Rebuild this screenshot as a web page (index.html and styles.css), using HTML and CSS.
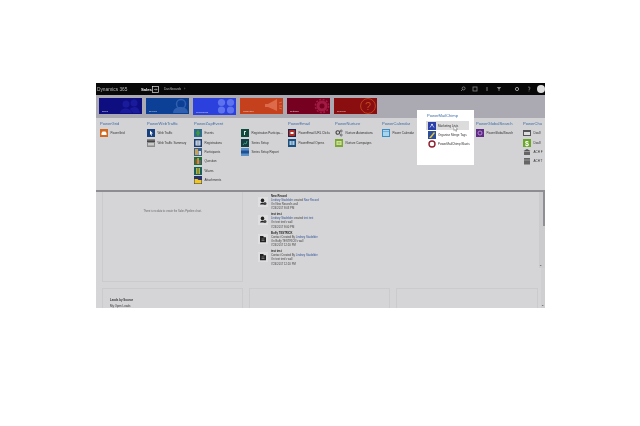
FILE: index.html
```html
<!DOCTYPE html>
<html lang="en">
<head>
<meta charset="utf-8">
<title>Dynamics 365 Sales</title>
<link rel="stylesheet" href="styles.css">
</head>
<body>
<div class="app">
  <header class="topbar">
    <span class="brand">Dynamics 365</span>
    <span class="module">Sales</span>
    <svg class="modicon" viewBox="0 0 7 7"><rect x=".5" y=".5" width="6" height="6" fill="none" stroke="#ddd" stroke-width=".7"/><path d="M2 3.5h3M4 2.5l1 1-1 1" fill="none" stroke="#ddd" stroke-width=".5"/></svg>
    <span class="crumb">Dashboards</span><span class="crumb">›</span>
    <div class="tools">
      <svg viewBox="0 0 6 6"><circle cx="3.6" cy="2.4" r="1.5" fill="none" stroke="#999" stroke-width=".7"/><path d="M2.5 3.5L1 5" stroke="#999" stroke-width=".7"/></svg>
      <svg viewBox="0 0 6 6"><rect x="1" y="1" width="4" height="4" fill="none" stroke="#888" stroke-width=".8"/></svg>
      <svg viewBox="0 0 6 6"><path d="M3 1v4" stroke="#888" stroke-width=".9"/></svg>
      <svg viewBox="0 0 6 6"><path d="M.8 1h4.4L3.4 3.2V5H2.6V3.2z" fill="#888"/></svg>
      <svg class="gap" viewBox="0 0 6 6"><circle cx="3" cy="3" r="1.6" fill="none" stroke="#999" stroke-width="1"/></svg>
      <svg viewBox="0 0 6 6"><path d="M2 1.6C2.4.8 4 .8 4 2 4 3 3 3 3 4M3 4.6v.8" fill="none" stroke="#999" stroke-width=".7"/></svg>
      <span class="avatar"></span>
    </div>
  </header>

  <nav class="tiles">
    <div class="tile sales"><span>Sales</span>
      <svg viewBox="0 0 43 16"><circle cx="27" cy="6" r="3.5" fill="#1a1a9c"/><circle cx="35" cy="5" r="3.5" fill="#1a1a9c"/><path d="M21 15c0-6 11-6 12 0zM31 11c3-3 9-3 10 4h-7z" fill="#1a1a9c"/></svg></div>
    <div class="tile service"><span>Service</span>
      <svg viewBox="0 0 43 16"><circle cx="35" cy="6" r="4.500" fill="none" stroke="#2f5fae" stroke-width="1.500"/><path d="M27 15c0-8 15-8 15 0z" fill="#2f5fae"/></svg></div>
    <div class="tile pack"><span>PowerPack</span>
      <svg viewBox="0 0 43 16"><circle cx="28.500" cy="4.500" r="3.600" fill="#5d72ee"/><circle cx="37.500" cy="4.500" r="3.600" fill="#5d72ee"/><circle cx="28.500" cy="12" r="3.600" fill="#5d72ee"/><circle cx="37.500" cy="12" r="3.600" fill="#5d72ee"/></svg></div>
    <div class="tile marketing"><span>Marketing</span>
      <svg viewBox="0 0 43 16"><path d="M28 6l9-5v12l-9-4h-3V6z" fill="#dd6a4a"/><path d="M39 5l3-1M39 8h3M39 10l3 1" stroke="#dd6a4a"/></svg></div>
    <div class="tile settings"><span>Settings</span>
      <svg viewBox="0 0 43 16"><circle cx="35" cy="8" r="4" fill="none" stroke="#a11a44" stroke-width="3"/><circle cx="35" cy="8" r="6.600" fill="none" stroke="#a11a44" stroke-width="1.600" stroke-dasharray="2 1.500"/></svg></div>
    <div class="tile training"><span>Training</span>
      <svg viewBox="0 0 43 16"><circle cx="34" cy="8" r="7.400" fill="none" stroke="#c14a1e" stroke-width=".9"/><text x="34" y="11.800" class="q">?</text></svg></div>
  </nav>

  <section class="menu">
    <div class="col">
      <h3>PowerGrid</h3>
      <div class="item"><svg viewBox="0 0 8 8"><rect width="8" height="8" fill="#d2691e"/><path d="M1.5 6V4l1-1.500h3L6.500 4v2z" fill="#fff"/></svg>PowerGrid</div>
    </div>
    <div class="col">
      <h3>PowerWebTraffic</h3>
      <div class="item"><svg viewBox="0 0 8 8"><rect width="8" height="8" fill="#17407e"/><path d="M3 1.500l3 3H4.400L5 6.500 4.200 6.800 3.600 5 3 6z" fill="#fff"/></svg>Web Traffic</div>
      <div class="item"><svg viewBox="0 0 8 8"><rect width="8" height="8" fill="#8b8b8b"/><rect y="1.500" width="8" height="1.500" fill="#444"/><rect x="1" y="4" width="6" height="2.500" fill="#c9c9c9"/></svg>Web Traffic Summary</div>
    </div>
    <div class="col">
      <h3>PowerZapEvent</h3>
      <div class="item"><svg viewBox="0 0 8 8"><rect width="8" height="8" fill="#2d6a8e"/><path d="M4 .5L6 4 4 7.500 2 4z" fill="#3f9a3a"/></svg>Events</div>
      <div class="item"><svg viewBox="0 0 8 8"><rect width="8" height="8" fill="#1c3f73"/><rect x="1.500" y="1.500" width="5" height="5" fill="#dfe4ea"/><path d="M2.500 3h3M2.500 5h3" stroke="#1c3f73" stroke-width=".6"/></svg>Registrations</div>
      <div class="item"><svg viewBox="0 0 8 8"><rect width="8" height="8" fill="#3c5f86"/><rect x="1" y="1" width="3" height="6" fill="#c9a25a"/><rect x="4.500" y="3" width="2.500" height="4" fill="#d8d8d8"/></svg>Participants</div>
      <div class="item"><svg viewBox="0 0 8 8"><rect width="8" height="8" fill="#1d6c3d"/><rect x="1.500" y="2" width="1.300" height="5" fill="#d9432b"/><rect x="3.400" y="1" width="1.300" height="6" fill="#e3c23a"/><rect x="5.300" y="3" width="1.300" height="4" fill="#b04ba0"/></svg>Question</div>
      <div class="item"><svg viewBox="0 0 8 8"><rect width="8" height="8" fill="#175f58"/><rect x="2" y="1" width="4" height="6" fill="#b9b23e"/><path d="M4 1v6" stroke="#175f58" stroke-width=".8"/></svg>Waves</div>
      <div class="item"><svg viewBox="0 0 8 8"><rect width="8" height="8" fill="#26306b"/><path d="M.5 3h3l1 1h3v3.500h-7z" fill="#f2c81e"/></svg>Attachments</div>
    </div>
    <div class="col">
      <h3 class="blank">&nbsp;</h3>
      <div class="item"><svg viewBox="0 0 8 8"><rect width="8" height="8" fill="#134a3e"/><path d="M3 2h2v1H4v3H3z" fill="#d9e4e0"/></svg>Registration Participa...</div>
      <div class="item"><svg viewBox="0 0 8 8"><rect width="8" height="8" fill="#123f45"/><path d="M2 6l1.500-2L5 5l1-3" fill="none" stroke="#4fc08d" stroke-width=".7"/></svg>Series Setup</div>
      <div class="item"><svg viewBox="0 0 8 8"><rect width="8" height="8" fill="#5b90c8"/><rect y="2.500" width="8" height="3" fill="#1c4f93"/></svg>Series Setup Report</div>
    </div>
    <div class="col">
      <h3>PowerEmail</h3>
      <div class="item"><svg viewBox="0 0 8 8"><rect width="8" height="8" fill="#182a55"/><rect x="1" y="1" width="6" height="6" rx="1" fill="#b92f22"/><rect x="2.500" y="3" width="3" height="2" fill="#fff"/></svg>PowerEmail URL Clicks</div>
      <div class="item"><svg viewBox="0 0 8 8"><rect width="8" height="8" fill="#1d4f7c"/><rect x="1.500" y="2" width="5" height="4" fill="#a7c8e2"/><path d="M4 2v4" stroke="#1d4f7c" stroke-width=".6"/></svg>PowerEmail Opens</div>
    </div>
    <div class="col">
      <h3>PowerNurture</h3>
      <div class="item"><svg viewBox="0 0 8 8"><circle cx="2.800" cy="3.500" r="1.800" fill="none" stroke="#444" stroke-width="1.100"/><circle cx="6.200" cy="2" r="1" fill="none" stroke="#555" stroke-width=".8"/><circle cx="6.200" cy="6" r="1" fill="none" stroke="#555" stroke-width=".8"/></svg>Nurture Automations</div>
      <div class="item"><svg viewBox="0 0 8 8"><rect width="8" height="8" fill="#79a832"/><rect x="1.500" y="2" width="5" height="4" fill="#dce8a8"/><path d="M2.500 3.300h3M2.500 4.800h3" stroke="#5f8a22" stroke-width=".5"/></svg>Nurture Campaigns</div>
    </div>
    <div class="col">
      <h3>PowerCalendar</h3>
      <div class="item"><svg viewBox="0 0 8 8"><rect width="8" height="8" fill="#3a8cc4"/><rect x="1" y="2.500" width="6" height="4.500" fill="#a9d3ec"/><path d="M1 1.500h6" stroke="#fff" stroke-width=".6"/></svg>Power Calendar</div>
    </div>
    <div class="col slot">
      <div class="popup">
        <h3>PowerMailChimp</h3>
        <div class="item hover"><svg viewBox="0 0 8 8"><rect width="8" height="8" fill="#2a3fa8"/><path d="M2 5.500l2-3 2 3" fill="none" stroke="#cfd6f5" stroke-width=".8"/><circle cx="4" cy="2.500" r=".8" fill="#fff"/></svg>Marketing Lists
          <svg class="cursor" viewBox="0 0 6 8"><path d="M1 .5v6l1.500-1.300L3.500 7.500l1-.4-1-2.300h2z" fill="#fff" stroke="#555" stroke-width=".5"/></svg></div>
        <div class="item"><svg viewBox="0 0 8 8"><rect width="8" height="8" fill="#2b4f9c"/><path d="M1 7l5-6 1 1-4 5z" fill="#e8c53a"/></svg>Organise Merge Tags</div>
        <div class="item"><svg viewBox="0 0 8 8"><circle cx="4" cy="4" r="3" fill="#fff" stroke="#8f1f2c" stroke-width="1.400"/></svg>PowerMailChimp Blasts</div>
      </div>
    </div>
    <div class="col">
      <h3>PowerGlobalSearch</h3>
      <div class="item"><svg viewBox="0 0 8 8"><rect width="8" height="8" fill="#5e2a86"/><circle cx="4" cy="4" r="2" fill="none" stroke="#c7a5dd" stroke-width=".8"/></svg>PowerGlobalSearch</div>
    </div>
    <div class="col">
      <h3>PowerChu</h3>
      <div class="item"><svg viewBox="0 0 8 8"><rect y="1" width="8" height="6" fill="#555"/><rect x="1" y="3" width="6" height="3" fill="#ddd"/></svg>Dou8</div>
      <div class="item"><svg viewBox="0 0 8 8"><rect width="8" height="8" fill="#6aa62a"/><text x="4" y="7" class="dollar">$</text></svg>Dou8</div>
      <div class="item"><svg viewBox="0 0 8 8"><path d="M4 1l3.500 2h-7z" fill="#555"/><rect x="1" y="3.500" width="6" height="3.500" fill="#666"/></svg>ACH F</div>
      <div class="item"><svg viewBox="0 0 8 8"><rect x="1" y="1" width="6" height="6.500" fill="#666"/><path d="M1 3h6" stroke="#ccc" stroke-width=".5"/></svg>ACH T</div>
    </div>
  </section>

  <main class="lower">
    <div class="board">
      <div class="card pipeline"><p class="empty">There is no data to create the Sales Pipeline chart.</p></div>
      <div class="feed">
        <article class="post">
          <svg class="avatar-box" viewBox="0 0 10 10"><rect width="10" height="10" fill="#dfdee0"/><circle cx="4.500" cy="3.400" r="1.800" fill="#222"/><path d="M2 7.500c0-2.500 5-2.500 5 0z" fill="#222"/><circle cx="7" cy="6.500" r="1.500" fill="#444"/></svg>
          <div class="lines"><b>New Record</b><span><a>Lindsey Stadelder</a> created <a>New Record</a></span><span>On New Record's wall</span><span>7/24/2017 8:03 PM</span></div>
        </article>
        <article class="post">
          <svg class="avatar-box" viewBox="0 0 10 10"><rect width="10" height="10" fill="#dfdee0"/><circle cx="4.500" cy="3.400" r="1.800" fill="#222"/><path d="M2 7.500c0-2.500 5-2.500 5 0z" fill="#222"/><circle cx="7" cy="6.500" r="1.500" fill="#444"/></svg>
          <div class="lines"><b>test test</b><span><a>Lindsey Stadelder</a> created <a>test test</a></span><span>On test test's wall</span><span>7/24/2017 8:00 PM</span></div>
        </article>
        <article class="post">
          <svg class="avatar-box" viewBox="0 0 10 10"><rect width="10" height="10" fill="#dfdee0"/><path d="M2 2h3.500v1.300H8v5H2z" fill="#222"/><path d="M3.500 5h3M3.500 6.500h3" stroke="#bbb" stroke-width=".5"/></svg>
          <div class="lines"><b>Buffy TESTRICK</b><span>Contact Created By <a>Lindsey Stadelder</a></span><span>On Buffy TESTRICK's wall</span><span>7/24/2017 12:20 PM</span></div>
        </article>
        <article class="post">
          <svg class="avatar-box" viewBox="0 0 10 10"><rect width="10" height="10" fill="#dfdee0"/><path d="M2 2h3.500v1.300H8v5H2z" fill="#222"/><path d="M3.500 5h3M3.500 6.500h3" stroke="#bbb" stroke-width=".5"/></svg>
          <div class="lines"><b>test test</b><span>Contact Created By <a>Lindsey Stadelder</a></span><span>On test test's wall</span><span>7/24/2017 12:20 PM</span></div>
        </article>
      </div>
      <div class="card leads"><b>Leads by Source</b><span>My Open Leads</span></div>
      <div class="card"></div>
      <div class="card"></div>
    </div>
    <div class="scrollbar">
      <div class="track"><span class="thumb"></span><span class="arrow">⌄</span></div>
      <div class="outer"><span class="arrow">⌄</span></div>
    </div>
  </main>
</div>
</body>
</html>
```

FILE: styles.css
```css
* { box-sizing: border-box; }
html, body { margin: 0; padding: 0; background: #fff; }
body { padding: 83px 0 0 96px; height: 426px; overflow: hidden; }

.app {
  width: 449px;
  height: 225px;
  display: flex;
  flex-direction: column;
  overflow: hidden;
  background: #d5d4d6;
  font-family: "Liberation Sans", Arial, sans-serif;
  color: #333;
  filter: blur(.5px);
}

.topbar {
  height: 12px;
  flex: none;
  display: flex;
  align-items: center;
  padding-left: 1px;
  background: #080808;
  color: #ccc;
}
.brand { font-size: 4.800px; width: 44px; color: #b9b9b9; }
.module { font-size: 4.200px; font-weight: bold; color: #eee; width: 11px; }
.modicon { width: 7px; height: 7px; margin-right: 5px; }
.crumb { font-size: 3.200px; margin-right: 3px; color: #bbb; }
.tools { margin-left: auto; display: flex; align-items: center; gap: 6px; }
.tools svg { width: 6px; height: 6px; }
.tools .gap { margin-left: 6px; }
.avatar { width: 8px; height: 8px; border-radius: 50%; background: #ddd; margin-left: -1px; }

.tiles {
  height: 23px;
  flex: none;
  display: flex;
  gap: 4px;
  padding: 3px 0 0 3px;
  background: #abaab2;
}
.tile { position: relative; width: 43px; height: 16px; color: #ddd; }
.tile svg { position: absolute; inset: 0; width: 43px; height: 16px; }
.tile span { position: absolute; left: 3px; bottom: 1.500px; font-size: 2.400px; z-index: 1; }
.sales { background: #0e0e80; }
.service { background: #0c3f96; }
.pack { background: #2b40dc; height: 17px; }
.marketing { background: #c5401c; }
.settings { background: #76001f; }
.training { background: #8a0d10; }
.q { font-family: "Liberation Sans", sans-serif; font-size: 11px; fill: #c14a1e; text-anchor: middle; }
.dollar { font-family: "Liberation Sans", sans-serif; font-size: 7px; font-weight: bold; fill: #fff; text-anchor: middle; }

.menu {
  height: 74px;
  flex: none;
  display: flex;
  padding: 3px 0 0 4px;
  background: #d3d2d4;
  border-bottom: 2px solid #8e8d91;
}
.col { width: 47px; flex: none; }
h3 {
  margin: 0 0 2.600px;
  height: 5px;
  line-height: 5px;
  font-size: 4.100px;
  font-weight: normal;
  color: #3f6ea8;
  white-space: nowrap;
}
.item {
  position: relative;
  height: 9.400px;
  display: flex;
  align-items: center;
  gap: 2.500px;
  font-size: 3px;
  color: #333;
  white-space: nowrap;
}
.item > svg:first-child { width: 8px; height: 8px; flex: none; }

.slot { position: relative; }
.popup {
  position: absolute;
  left: -12px;
  top: -11px;
  width: 57px;
  height: 55px;
  padding: 3px 5px 0 9px;
  background: #fff;
  z-index: 2;
}
.popup h3 { margin-bottom: 3px; padding-left: 1px; }
.popup .item { padding-left: 1.500px; }
.popup .hover { background: #dcdcdc; }
.cursor { position: absolute; left: 27px; top: 4px; width: 5px; height: 7px; }

.lower { flex: 1; display: flex; min-height: 0; padding-left: 6px; }
.board {
  width: 436px;
  flex: none;
  display: grid;
  grid-template-columns: 141px 141px 142px;
  grid-template-rows: 90px 40px;
  gap: 6px;
}
.card { border: 1px solid #cbcacc; }
.pipeline { border-top: 0; padding-top: 18px; }
.empty { margin: 0; font-size: 2.600px; line-height: 3px; text-align: center; color: #666; }
.feed { grid-column: span 2; padding: 2.500px 0 0 9px; display: flex; flex-direction: column; gap: 1px; }
.post { height: 17.500px; display: flex; gap: 3px; }
.avatar-box { width: 10px; height: 10px; flex: none; margin-top: 2px; }
.lines { display: flex; flex-direction: column; font-size: 2.750px; line-height: 4.200px; color: #444; white-space: nowrap; }
.lines b { color: #222; }
.lines a { color: #34579a; }
.leads { padding: 9px 0 0 7px; display: flex; flex-direction: column; gap: 2px; font-size: 2.900px; line-height: 4px; }

.scrollbar { width: 6px; margin-left: 1px; display: flex; flex-direction: column; background: #d5d4d6; }
.track { position: relative; height: 76px; background: #cbcacd; }
.thumb { display: block; width: 2.500px; height: 34px; margin-left: auto; background: #8f8e92; }
.arrow { position: absolute; left: 0; bottom: 2px; width: 4px; height: 3px; font-size: 4px; line-height: 3px; color: #333; }
.outer { position: relative; flex: 1; border-left: 2px solid #d5d4d6; background: #cfced1; }
```
